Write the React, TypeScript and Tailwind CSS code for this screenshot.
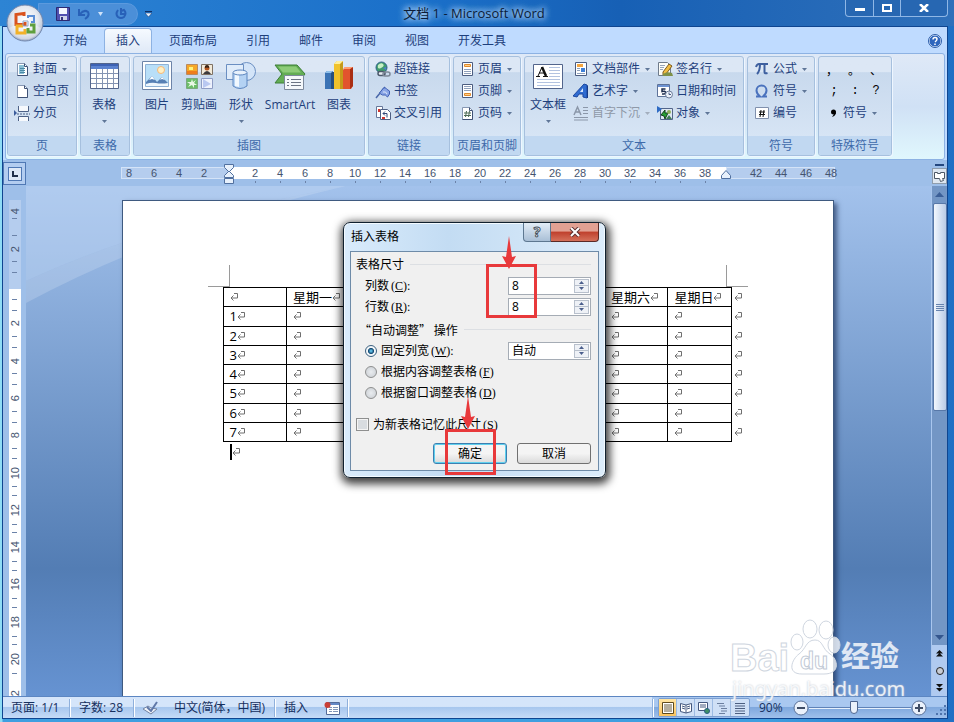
import React from "react";

type Kids = { children?: React.ReactNode };

function Svg({ w, h, children }: { w: number; h: number } & Kids) {
  return (
    <svg width={w} height={h} viewBox={`0 0 ${w} ${h}`} className="shrink-0" aria-hidden="true">
      {children}
    </svg>
  );
}

function Caret({ faded = false }: { faded?: boolean }) {
  return (
    <Svg w={5} h={3}>
      <path d="M0 0h5L2.5 3z" fill={faded ? "#a3aebd" : "#5f7698"} />
    </Svg>
  );
}

/* ---------- small ribbon icons (16 x 16) ---------- */

function PageIcon({ children }: Kids) {
  return (
    <Svg w={16} h={16}>
      <path d="M3.5 2.5h7l3 3v9h-10z" fill="#fff" stroke="#8797b3" />
      <path d="M13.500 6v8.500h-10M10.500 2.500v3h3" fill="none" stroke="#3f5276" />
      {children}
    </Svg>
  );
}

const CoverIcon = () => (
  <PageIcon>
    <path d="M5 4h5v9H5z" fill="#8cc0d6" />
    <path d="M6 7.500h5M6 9.500h5M6 11.500h5" stroke="#4c8aa6" />
  </PageIcon>
);
const BlankIcon = () => <PageIcon />;
const BreakIcon = () => (
  <Svg w={16} h={16}>
    <path d="M4.500 1v5.500h10V1M4.500 16v-4.500h10V16" fill="#f6f9fd" stroke="#4d6288" />
    <path d="M3 9h13" stroke="#4d6288" strokeDasharray="2 1" />
    <path d="M0 5l3 3-3 3z" fill="#3c5d9c" />
  </Svg>
);
const LinkIcon = () => (
  <Svg w={16} h={16}>
    <circle cx="6.500" cy="6.500" r="5.500" fill="#3f9a6c" stroke="#2f5f8d" />
    <path d="M3 4q3-3 5-1t-2 4-3-3" fill="#c6efc4" />
    <path d="M8 7l3-1v3z" fill="#4d7fd0" />
    <rect x="3" y="10.500" width="7" height="4" rx="2" fill="#e9eef5" stroke="#4b586b" strokeWidth="1.500" />
    <rect x="8" y="11" width="7" height="4" rx="2" fill="none" stroke="#7c8797" strokeWidth="1.500" />
  </Svg>
);
const BookmarkIcon = () => (
  <Svg w={16} h={16}>
    <path d="M1 15L10 4" stroke="#4967a8" strokeWidth="1.500" />
    <path d="M8.500 5q2-1 3 1l3 2q1 3-2 6-2-3-5-2-2-1-3-2z" fill="#8aa6e6" stroke="#3f5fb4" />
    <path d="M8 9q3-1 4 2" fill="none" stroke="#dbe6fb" />
  </Svg>
);
const CrossIcon = () => (
  <Svg w={16} h={16}>
    <path d="M1.500 1.500h6v11h-6z" fill="#fff" stroke="#66779a" />
    <path d="M5.500 4.500h7l3 3v7h-10z" fill="#fff" stroke="#4d5f84" />
    <path d="M3 4h2v3H3z" fill="#d0352f" />
    <path d="M8 8.500h4v4M8 8.500l2-2M8 8.500l2 2" fill="none" stroke="#2f4778" />
    <path d="M7 12h3v2H7z" fill="#d0352f" />
  </Svg>
);
const HeaderIcon = () => (
  <Svg w={16} h={16}>
    <path d="M3.500 1.500h10v13h-10z" fill="#fff" stroke="#4c5d80" />
    <path d="M5.500 3.500h6v2h-6z" fill="#ffd08a" stroke="#e08a2c" />
    <path d="M5 8.500h7M5 10.500h7M5 12.500h7" stroke="#8fa0bb" />
  </Svg>
);
const FooterIcon = () => (
  <Svg w={16} h={16}>
    <path d="M3.500 1.500h10v13h-10z" fill="#fff" stroke="#4c5d80" />
    <path d="M5.500 10.500h6v2h-6z" fill="#ffd08a" stroke="#e08a2c" />
    <path d="M5 3.500h7M5 5.500h7M5 7.500h7" stroke="#8fa0bb" />
  </Svg>
);
const NumberIcon = () => (
  <PageIcon>
    <path d="M7.500 6l-1 6M10.500 6l-1 6M5 8h7M5 10.500h7" stroke="#4d6b55" />
  </PageIcon>
);
const PartsIcon = () => (
  <Svg w={16} h={16}>
    <path d="M2.500 1.500h11v13h-11z" fill="#fff" stroke="#4c5d80" />
    <path d="M4 3h6v3H4z" fill="#f5a640" />
    <path d="M8 7h4v4H8z" fill="#3f7fd6" />
    <path d="M4 7.500h3M4 9.500h3M4 12.500h8" stroke="#8fa0bb" />
  </Svg>
);
const WordArtIcon = () => (
  <Svg w={16} h={16}>
    <path d="M0 13L11 1l3 1v13l-4-1v-3l-4 0-2 3z" fill="#2f6bd0" stroke="#1c47a0" />
    <path d="M14 2l1 1v12l-1 0z" fill="#173a86" />
    <path d="M10 5v4H7z" fill="#d8e6fb" />
  </Svg>
);
const DropCapIcon = () => (
  <Svg w={16} h={16}>
    <path d="M1 10L4.500 2 8 10M2.500 7h4" fill="none" stroke="#8b97a9" strokeWidth="1.500" />
    <path d="M10 2.500h5M10 5.500h5M10 8.500h5M1 12.500h14M1 15h14" stroke="#8b97a9" />
  </Svg>
);
const SignIcon = () => (
  <Svg w={16} h={16}>
    <path d="M1.500 1.500h9l3 3v10h-12z" fill="#fdfdf8" stroke="#6f7b8b" />
    <path d="M3 4.500h5M3 6.500h4M3 8.500h3" stroke="#97a5ba" />
    <path d="M6 11l6-8 3 2-6 8-3 1z" fill="#f2bd42" stroke="#7d5a1c" />
    <path d="M6 13q4-3 9-1l1 3H6z" fill="#7f9147" />
  </Svg>
);
const DateIcon = () => (
  <Svg w={16} h={16}>
    <path d="M.5 1.500h12v12H.5z" fill="#fff" stroke="#5e7399" />
    <path d="M1 2h11v2H1z" fill="#6d93d3" />
    <path d="M8.500 6H5v2.500q3.500-1 3.500 1t-3.500 1.500" fill="none" stroke="#1d2c4c" strokeWidth="1.500" />
    <circle cx="12" cy="11.500" r="3.500" fill="#eef3fb" stroke="#6b7c98" />
    <path d="M12 9.500v2h2" fill="none" stroke="#44587f" />
  </Svg>
);
const ObjectIcon = () => (
  <Svg w={16} h={16}>
    <path d="M3.500 3.500h12v11h-12z" fill="#dfe9f4" stroke="#52658a" />
    <path d="M0 1l5 3-5 4z" fill="#2e6bc4" />
    <path d="M4 10l4-5v3h3l-3 6-1-3z" fill="#27a035" stroke="#123f1a" />
    <circle cx="12" cy="7" r="2" fill="#8fb05a" />
    <path d="M9 14l3-4 3 4z" fill="#3f7d56" />
  </Svg>
);
const PiIcon = () => (
  <Svg w={16} h={16}>
    <path d="M2 6q1-3 3-3h9M6 3q0 7-3 10M10.500 3v8q0 2 3 1" fill="none" stroke="#3d5f9f" strokeWidth="2" />
  </Svg>
);
const OmegaIcon = () => (
  <Svg w={16} h={16}>
    <path d="M2 13.500h4q-3.500-3-3.500-6a5 5 0 0110 0q0 3-3.500 6h4" fill="none" stroke="#4a72bd" strokeWidth="2" />
  </Svg>
);
const HashIcon = () => (
  <Svg w={16} h={16}>
    <path d="M1.500 2.500h13v11h-13z" fill="#fff" stroke="#8090ad" />
    <path d="M7 5L6 12M10 5L9 12M5 7h6M5 9.500h6" stroke="#111" />
  </Svg>
);
const CommaIcon = () => (
  <Svg w={8} h={10}>
    <circle cx="3.500" cy="4" r="2.500" fill="#000" />
    <path d="M6 4q0 4-4 5l2-3z" fill="#000" />
  </Svg>
);

/* ---------- large ribbon icons (32 x 32) ---------- */

const TableBig = () => (
  <Svg w={32} h={32}>
    <path d="M2.500 4.500h28v25h-28z" fill="#fff" stroke="#53658c" />
    <path d="M3 5h27v5H3z" fill="#5b82cf" />
    <path d="M3 5h27v2H3z" fill="#3d62b4" />
    <path d="M8.500 10v19M14.500 10v19M19.500 10v19M25.500 10v19M3 14.500h27M3 19.500h27M3 24.500h27" stroke="#8494b3" />
  </Svg>
);
const PictureBig = () => (
  <Svg w={32} h={32}>
    <path d="M1.500 2.500h29v28h-29z" fill="#fff" stroke="#6d84a8" />
    <path d="M4.500 5.500h23v22h-23z" fill="#b9dff8" stroke="#8fb2d6" />
    <circle cx="20" cy="11" r="3.500" fill="#fff0c4" stroke="#f7b877" />
    <path d="M5 23l6-6 5 6 5-5 6 6v3H5z" fill="#5780b5" />
    <path d="M11 17l3 4-3-1-3 1zM21 18l3 3-3-1-2 1z" fill="#fff" />
    <path d="M5 25q5-2 10-1t12 0v3H5z" fill="#eef6fd" />
  </Svg>
);
const ClipBig = () => (
  <Svg w={32} h={32}>
    <path d="M3.500 5.500h11v10h-11z" fill="#f6a828" stroke="#b98a60" />
    <path d="M4 12h10v3H4z" fill="#ee7d1c" />
    <path d="M6 8h4v3H6z" fill="#fff27a" />
    <path d="M18.500 5.500h11v10h-11z" fill="#f2ead9" stroke="#7f7264" />
    <circle cx="24" cy="9" r="2.500" fill="#b5561f" />
    <path d="M22 7q2-2 4 0v2q-2-1-4 0z" fill="#3a2417" />
    <path d="M20 15q4-6 8 0z" fill="#3c3a3c" />
    <path d="M3.500 19.500h11v10h-11z" fill="#6bbd68" stroke="#7ba87e" />
    <path d="M9 20l1 3 3-2-2 3 3 2-3 0 0 3-2-3-4 2 2-3-3-2 4 0z" fill="#e9f8e4" />
    <path d="M18.500 19.500h11v10h-11z" fill="#eef2fc" stroke="#8e9cc4" />
    <path d="M20 20l8 5-8 4z" fill="#b9c8f1" />
  </Svg>
);
const ShapesBig = () => (
  <Svg w={32} h={32}>
    <circle cx="21.500" cy="12.500" r="9" fill="#d3e4f8" stroke="#6b8fc2" />
    <path d="M1.500 5.500h17v15h-17z" fill="#e0ecfa" stroke="#6b8fc2" />
    <path d="M8 14v13q7 5 14 0V14z" fill="#b4d2f3" stroke="#5d86bf" />
    <path d="M10 15h4v13l-4-1z" fill="#f1f8fe" />
    <ellipse cx="15" cy="13.500" rx="7" ry="2.500" fill="#e7f1fc" stroke="#5d86bf" />
  </Svg>
);
const SmartBig = () => (
  <Svg w={32} h={32}>
    <path d="M1 6h22l8 9-7 9H1l7-9z" fill="#63ad55" stroke="#3d7f36" />
    <path d="M4 7.500h18l5 6H9z" fill="#8dcc78" />
    <path d="M10.500 16.500h19v14h-19z" fill="#f5f8fb" stroke="#7c899c" />
    <path d="M13 20.500h2M17 20.500h10M13 23.500h2M17 23.500h10M13 26.500h2M17 26.500h10" stroke="#6b7484" />
  </Svg>
);
const ChartBig = () => (
  <Svg w={32} h={32}>
    <path d="M2 14l2-2h6v18H2z" fill="#3b73b5" />
    <path d="M8 13h3v17H8z" fill="#26507f" />
    <path d="M2 14l2-2h6l-2 2z" fill="#8fc0ea" />
    <path d="M11 5l3-3h6v28h-9z" fill="#f0c22b" />
    <path d="M17 4l3-2v28h-3z" fill="#c59a1a" />
    <path d="M11 5l3-3h6l-3 3z" fill="#ffef9a" />
    <path d="M20 11l2-3h8v19l-2 3h-8z" fill="#e2532d" />
    <path d="M27 10l3-2v19l-3 3z" fill="#a92e14" />
    <path d="M20 10l2-2h8l-3 2z" fill="#ff9d72" />
  </Svg>
);
const TextBoxBig = () => (
  <Svg w={32} h={32}>
    <path d="M1.500 5.500h29v24h-29z" fill="#fff" stroke="#53658c" />
    <path d="M6 17l4-9" stroke="#111" />
    <path d="M10 8l4 9" stroke="#111" strokeWidth="2.500" />
    <path d="M7 14h6M4 17.500h4M11 17.500h5" stroke="#111" />
    <path d="M17 8.500h11M17 11.500h11M17 14.500h11M17 17.500h11M5 20.500h23M5 23.500h23M5 26.500h23" stroke="#b3c3e0" />
  </Svg>
);

/* ---------- ribbon building blocks ---------- */

function Group({ label, className, children }: { label: string; className: string } & Kids) {
  return (
    <section
      className={`flex shrink-0 flex-col overflow-hidden rounded-[3px] border border-[#a6c0de] bg-linear-to-b from-[#dce7f5] from-15% via-[#c8d9ed] via-16% to-[#dbe8f7] shadow-[1px_1px_0_#eef6ff] ${className}`}
    >
      <div className="flex flex-1 px-[2px]">{children}</div>
      <h2 className="h-[19px] bg-[#c1d8f1] text-center leading-[19px] text-[#3e6aaa]">{label}</h2>
    </section>
  );
}

function Small({
  icon,
  text,
  caret = false,
  disabled = false,
}: {
  icon: React.ReactNode;
  text: string;
  caret?: boolean;
  disabled?: boolean;
}) {
  return (
    <button
      disabled={disabled}
      className="flex h-[22px] items-center gap-[3px] whitespace-nowrap text-[#1e3f7c] disabled:text-[#8f99a8]"
    >
      {icon}
      <span>{text}</span>
      {caret && (
        <span className="ml-[2px]">
          <Caret faded={disabled} />
        </span>
      )}
    </button>
  );
}

function Big({
  icon,
  text,
  caret = false,
  className = "w-[42px]",
}: {
  icon: React.ReactNode;
  text: string;
  caret?: boolean;
  className?: string;
}) {
  return (
    <button className={`flex shrink-0 flex-col items-center whitespace-nowrap pt-[2px] text-[#1e3f7c] ${className}`}>
      {icon}
      <span className="mt-[5px] leading-[18px]">{text}</span>
      <span className="mt-[2px] flex h-[10px] items-center">{caret && <Caret />}</span>
    </button>
  );
}

const Column = ({ className = "", children }: { className?: string } & Kids) => (
  <div className={`flex flex-col pt-px ${className}`}>{children}</div>
);

function Ribbon() {
  return (
    <div className="mx-[2px] flex h-[107px] gap-[3px] rounded-[3px] border border-[#8db2e3] bg-linear-to-b from-[#dfe9f7] via-[#d0e1f5] to-[#e0f7fd] px-px pt-[2px] pb-[3px]">
      <Group label="页" className="w-[70px]">
        <Column className="pl-[4px]">
          <Small icon={<CoverIcon />} text="封面" caret />
          <Small icon={<BlankIcon />} text="空白页" />
          <Small icon={<BreakIcon />} text="分页" />
        </Column>
      </Group>
      <Group label="表格" className="w-[50px]">
        <Big icon={<TableBig />} text="表格" caret />
      </Group>
      <Group label="插图" className="w-[232px]">
        <Big icon={<PictureBig />} text="图片" />
        <Big icon={<ClipBig />} text="剪贴画" />
        <Big icon={<ShapesBig />} text="形状" caret />
        <Big icon={<SmartBig />} text="SmartArt" className="w-[56px]" />
        <Big icon={<ChartBig />} text="图表" />
      </Group>
      <Group label="链接" className="w-[82px]">
        <Column className="pl-[4px]">
          <Small icon={<LinkIcon />} text="超链接" />
          <Small icon={<BookmarkIcon />} text="书签" />
          <Small icon={<CrossIcon />} text="交叉引用" />
        </Column>
      </Group>
      <Group label="页眉和页脚" className="w-[68px]">
        <Column className="pl-[3px]">
          <Small icon={<HeaderIcon />} text="页眉" caret />
          <Small icon={<FooterIcon />} text="页脚" caret />
          <Small icon={<NumberIcon />} text="页码" caret />
        </Column>
      </Group>
      <Group label="文本" className="w-[220px]">
        <Big icon={<TextBoxBig />} text="文本框" caret />
        <Column className="w-[84px] pl-[4px]">
          <Small icon={<PartsIcon />} text="文档部件" caret />
          <Small icon={<WordArtIcon />} text="艺术字" caret />
          <Small icon={<DropCapIcon />} text="首字下沉" caret disabled />
        </Column>
        <Column className="pl-[4px]">
          <Small icon={<SignIcon />} text="签名行" caret />
          <Small icon={<DateIcon />} text="日期和时间" />
          <Small icon={<ObjectIcon />} text="对象" caret />
        </Column>
      </Group>
      <Group label="符号" className="w-[68px]">
        <Column className="pl-[4px]">
          <Small icon={<PiIcon />} text="公式" caret />
          <Small icon={<OmegaIcon />} text="符号" caret />
          <Small icon={<HashIcon />} text="编号" />
        </Column>
      </Group>
      <Group label="特殊符号" className="w-[74px]">
        <Column className="flex-1 text-black">
          <div className="flex h-[22px] items-end justify-between pl-[5px] pr-[7px]">
            {["，", "。", "、"].map((c) => (
              <button key={c} className="w-[12px]">
                {c}
              </button>
            ))}
          </div>
          <div className="flex h-[22px] items-center justify-between px-[7px] font-['Liberation_Mono',monospace]">
            {[";", ":", "?"].map((c) => (
              <button key={c} className="w-[12px]">
                {c}
              </button>
            ))}
          </div>
          <div className="flex pl-[9px]">
            <Small icon={<span className="pr-[2px]"><CommaIcon /></span>} text="符号" caret />
          </div>
        </Column>
      </Group>
    </div>
  );
}

/* ---------- window chrome ---------- */

function OfficeButton() {
  return (
    <button aria-label="Office 按钮" className="absolute left-[6px] top-[4px] z-10">
      <svg width="38" height="38" viewBox="0 0 38 38" aria-hidden="true">
        <defs>
          <radialGradient id="orb" cx="50%" cy="40%" r="60%">
            <stop offset="0" stopColor="#ffffff" />
            <stop offset=".6" stopColor="#e3e8f0" />
            <stop offset="1" stopColor="#a9b4cb" />
          </radialGradient>
        </defs>
        <circle cx="19" cy="19" r="18" fill="url(#orb)" stroke="#6f86ad" />
        <path d="M3 24q16-9 32 0a17 17 0 01-32 0z" fill="#fff" opacity=".35" />
        <g fill="none">
          <path d="M18 12V9.500l-8 1v10h9V18" stroke="#d9531e" strokeWidth="3" />
          <path d="M22 14v-2h6v6h-3" stroke="#5b8ed6" strokeWidth="2" />
          <path d="M17 22h-6v7h8v-4" stroke="#f2b128" strokeWidth="3" />
          <path d="M24 21h4v7h-6v-4" stroke="#5f9f3e" strokeWidth="3" />
          <path d="M17 17h5v5h-5z" stroke="#8fa6c8" />
        </g>
      </svg>
    </button>
  );
}

function TitleBar() {
  return (
    <header className="flex h-[26px] shrink-0 items-start">
      <div className="flex flex-1 items-start">
        <div className="ml-[38px] mt-[3px] flex h-[22px] items-center rounded-r-[11px] border border-[#5b9ade] bg-[#4b8fd8] pl-[17px] pr-[10px]">
          <button aria-label="保存">
            <Svg w={14} h={14}>
              <path d="M.5.5h13v13H.5z" fill="#5150b0" stroke="#2b2a73" />
              <path d="M3 1h8v6H3z" fill="#f4f6ff" />
              <path d="M4 9h7v4H4z" fill="#cfd3ea" />
              <path d="M5 10h2v3H5z" fill="#33327e" />
            </Svg>
          </button>
          <button aria-label="撤消" className="ml-[8px]">
            <Svg w={12} h={12}>
              <path d="M1 1v6h6M2 6q4-5 8-2 2 4-3 7" fill="none" stroke="#2861b8" strokeWidth="2" />
            </Svg>
          </button>
          <button aria-label="撤消列表" className="ml-[8px]">
            <Svg w={5} h={4}>
              <path d="M0 0h5L2.500 4z" fill="#cfe3fa" />
            </Svg>
          </button>
          <button aria-label="重复" className="ml-[12px]">
            <Svg w={12} h={12}>
              <path d="M3 2q-3 4 0 7 3 2 6 0 3-4 0-7L6 3M6 0v6h5" fill="none" stroke="#2861b8" strokeWidth="2" />
            </Svg>
          </button>
        </div>
        <button aria-label="自定义快速访问工具栏" className="ml-[7px] mt-[11px]">
          <Svg w={7} h={6}>
            <path d="M0 .5h7" stroke="#0d2f66" />
            <path d="M0 2h7L3.500 6z" fill="#e6f0fc" stroke="#0d2f66" strokeWidth=".5" />
          </Svg>
        </button>
      </div>
      <h1 className="text-[13px] leading-[26px] text-[#0b1c38] [text-shadow:0_0_6px_#b5d6f8,0_0_6px_#b5d6f8,0_0_8px_#b5d6f8]">
        文档 1 - Microsoft Word
      </h1>
      <div className="flex flex-1 justify-end pr-[6px]">
        <div className="flex h-[17px] rounded-b-[4px] border border-t-0 border-[#8fb7e6] bg-[#2767b2]">
          <button aria-label="最小化" className="flex w-[28px] items-center justify-center border-r border-[#8fb7e6]">
            <span className="mt-[3px] h-[3px] w-[10px] bg-white" />
          </button>
          <button aria-label="还原" className="flex w-[27px] items-center justify-center border-r border-[#8fb7e6]">
            <span className="h-[8px] w-[10px] border-2 border-white" />
          </button>
          <button aria-label="关闭" className="flex w-[46px] items-center justify-center">
            <Svg w={10} h={8}>
              <path d="M1 0l8 8M9 0L1 8" stroke="#fff" strokeWidth="2.500" />
            </Svg>
          </button>
        </div>
      </div>
    </header>
  );
}

function Tabs() {
  const tabs = ["开始", "插入", "页面布局", "引用", "邮件", "审阅", "视图", "开发工具"];
  return (
    <nav className="flex h-[26px] items-end gap-[5px] pl-[48px] pr-[5px]">
      {tabs.map((t) => (
        <button
          key={t}
          className={
            t === "插入"
              ? "h-[25px] rounded-t-[4px] border border-b-0 border-[#8db2e3] bg-linear-to-b from-[#f6faff] to-[#dfe9f7] px-[11px] text-[#1e3f7c]"
              : "h-[25px] px-[12px] text-[#1e3f7c]"
          }
        >
          {t}
        </button>
      ))}
      <button aria-label="帮助" className="mb-[5px] ml-auto">
        <Svg w={14} h={14}>
          <circle cx="7" cy="7" r="6" fill="#2f66bd" stroke="#e7f0fc" strokeWidth="1" />
          <circle cx="7" cy="7" r="6.500" fill="none" stroke="#2c5ca8" />
          <path d="M5 5.500q0-2 2-2t2 1.500-2 3M7 9.500v1.500" fill="none" stroke="#fff" strokeWidth="1.500" />
        </Svg>
      </button>
    </nav>
  );
}

/* ---------- rulers ---------- */

const leftMarks = [8, 6, 4, 2];
const bodyMarks = Array.from({ length: 19 }, (_, i) => (i + 1) * 2);
const rightMarks = [42, 44, 46, 48];

function Mark({ n, tick = false }: { n: number; tick?: boolean }) {
  return (
    <span className="relative w-[25px] shrink-0 text-center">
      {n}
      {tick && <span className="absolute left-[12px] top-[14px] h-[2px] w-px bg-[#6b82a8]" />}
    </span>
  );
}

function HorizontalRuler() {
  return (
    <div className="flex h-[26px] shrink-0 bg-[#9ebfe9] pt-[2px]">
      <button
        aria-label="左对齐式制表符"
        className="flex h-[23px] w-[23px] items-center justify-center border border-[#4f78b4] bg-[#b3cdf0]"
      >
        <span className="flex h-[14px] w-[14px] items-center justify-center border border-[#4f78b4] bg-[#dfe9f7]">
          <span className="h-[6px] w-[6px] border-b-2 border-l-2 border-[#22304a]" />
        </span>
      </button>
      <div className="flex flex-1 justify-center pr-[2px] pt-[5px] font-['Liberation_Sans','Noto_Sans_CJK_SC',sans-serif] text-[11px] leading-[12px] text-[#45546f]">
        <div className="flex h-[12px] w-[108px] justify-end border border-[#d4e3f7] bg-[#b5cdee] pr-[11px] leading-[10px]">
          {leftMarks.map((n) => (
            <Mark key={n} n={n} />
          ))}
        </div>
        <div className="relative flex h-[12px] w-[497px] bg-white pl-[14px]">
          {bodyMarks.map((n) => (
            <Mark key={n} n={n} tick />
          ))}
          <svg className="absolute -left-[5px] -top-[3px]" width="10" height="21" viewBox="0 0 10 21" aria-hidden="true">
            <path d="M.5.5h9v3L5 8 .5 3.500zM.5 13.500v-2L5 7l4.500 4.500v2zM.5 14.500h9v5h-9z" fill="#e8f1fc" stroke="#51709f" />
          </svg>
          <svg className="absolute -right-[5px] top-[3px]" width="10" height="9" viewBox="0 0 10 9" aria-hidden="true">
            <path d="M.5 8.500v-3L5 .5l4.500 5v3z" fill="#e8f1fc" stroke="#51709f" />
          </svg>
        </div>
        <div className="flex h-[12px] w-[109px] border border-[#d4e3f7] bg-[#b5cdee] pl-[17px] leading-[10px]">
          {rightMarks.map((n) => (
            <Mark key={n} n={n} />
          ))}
        </div>
      </div>
      <div className="flex w-[16px] flex-col items-center">
        <span className="mt-[2px] h-[2px] w-[9px] bg-[#24477f]" />
        <button
          aria-label="标尺"
          className="mt-[2px] flex h-[16px] w-[15px] items-center justify-center border border-[#8f9dad] bg-[#dde6f0]"
        >
          <Svg w={13} h={13}>
            <path d="M1.500 2.500h3v1h3v-1h4v6h-2l1 2-3 1-1-3h-5z" fill="#fff" stroke="#4d5866" />
          </Svg>
        </button>
      </div>
    </div>
  );
}

function VerticalRuler() {
  const cell = "flex flex-1 flex-col items-center justify-around";
  const tick = <span className="h-px w-[5px] bg-[#6b82a8]" />;
  const num = (n: number | string) => <span className="[writing-mode:vertical-rl] rotate-180 leading-[12px]">{n}</span>;
  return (
    <div className="flex w-[23px] shrink-0 flex-col items-center overflow-hidden bg-[#9ebfe9] pt-[14px] font-['Liberation_Sans',sans-serif] text-[11px] text-[#45546f]">
      <div className="flex w-[12px] flex-1 flex-col bg-[linear-gradient(#b5cdee_89px,#fff_89px)]">
        <div className="flex h-[30px] flex-col items-center gap-[4px] pt-[8px]">
          {num(4)}
          {tick}
        </div>
        {[2, 0, 2, 4, 6, 8, 10, 12, 14, 16, 18, 20].map((n, i) => (
          <div key={i} className={cell}>
            {tick}
            {n === 0 ? <span className="h-[6px]" /> : num(n)}
            {tick}
          </div>
        ))}
        <div className="flex h-[18px] flex-col items-center gap-[4px] overflow-hidden pt-[8px]">
          {tick}
          {num(2)}
        </div>
      </div>
    </div>
  );
}

/* ---------- document ---------- */

const Return = () => (
  <span className="inline-block align-middle">
    <Svg w={8} h={8}>
      <path d="M4 .5h3.500V5H1M3.500 2.500L1 5l2.500 2.500" fill="none" stroke="#6f6f6f" />
    </Svg>
  </span>
);

/* The columns between Monday and Saturday lie behind the dialog. */
const days = ["", "星期一", null, null, null, null, "星期六", "星期日"];

function DocumentPage() {
  return (
    <article className="relative mt-[14px] w-[712px] border border-b-0 border-[#3f5a80] bg-white shadow-[3px_3px_5px_rgba(20,40,80,.65)]">
      <div className="mx-[85px] flex justify-between pt-[64px]">
        <span className="h-[22px] w-[22px] border-b border-r border-[#9a9a9a]" />
        <span className="h-[22px] w-[22px] border-b border-l border-[#9a9a9a]" />
      </div>
      <table className="ml-[100px] h-[155px] w-[523px] table-fixed border-collapse text-[13px] leading-[18px] text-black">
        <tbody>
          {[0, 1, 2, 3, 4, 5, 6, 7].map((r) => (
            <tr key={r}>
              {days.map((d, c) => (
                <td key={c} className="overflow-hidden whitespace-nowrap border border-black p-0 pl-[6px]">
                  {d !== null && (
                    <span className="flex h-[18px] items-center">
                      {r === 0 ? d : c === 0 ? r : ""}
                      <Return />
                    </span>
                  )}
                </td>
              ))}
              <td className="w-[14px] p-0 pl-[2px]">
                <span className="flex">
                  <Return />
                </span>
              </td>
            </tr>
          ))}
        </tbody>
      </table>
      <p className="ml-[107px] mt-[2px] flex h-[16px] items-center border-l-2 border-black">
        <Return />
      </p>
    </article>
  );
}

function Watermark() {
  return (
    <div className="absolute bottom-[20px] right-[48px] h-[84px] w-[176px] font-['Liberation_Sans','Noto_Sans_CJK_SC',sans-serif] text-white/80">
      <svg className="absolute left-[58px] top-0" width="54" height="60" viewBox="0 0 54 60" aria-hidden="true">
        <g fill="#fff" fillOpacity=".75" stroke="#cfd6e0">
          <ellipse cx="9" cy="24" rx="6" ry="8" />
          <ellipse cx="22" cy="11" rx="7" ry="9" />
          <ellipse cx="38" cy="12" rx="7" ry="9" />
          <ellipse cx="46" cy="27" rx="6" ry="8" />
          <path d="M27 22c-9 0-9 9-16 14s-13 20 3 20h22c17 0 14-15 6-20s-7-14-15-14z" />
        </g>
      </svg>
      <span className="absolute left-0 top-[21px] text-[38px] font-bold leading-[38px] [-webkit-text-stroke:1px_#cfd6e0]">
        Bai
      </span>
      <span className="absolute left-[70px] top-[31px] text-[23px] font-bold leading-[24px] [-webkit-text-stroke:1px_#c2cad6]">
        du
      </span>
      <span className="absolute left-[111px] top-[22px] text-[29px] font-bold leading-[34px]">经验</span>
      <span className="absolute left-[2px] top-[60px] font-['Noto_Sans',sans-serif] text-[20px] leading-[22px] [text-shadow:0_0_2px_#b9c2ce]">
        jingyan.baidu.com
      </span>
    </div>
  );
}

function VerticalScrollbar() {
  return (
    <div className="flex w-[16px] shrink-0 flex-col items-center border-l border-[#a9c6ee] bg-[#7396c5]">
      <button aria-label="向上滚动" className="flex h-[17px] w-full items-center justify-center">
        <Svg w={9} h={5}>
          <path d="M0 5h9L4.500 0z" fill="#3b5f98" />
        </Svg>
      </button>
      <div className="flex h-[208px] w-[14px] flex-col items-center justify-center gap-px rounded-[2px] border border-[#5878a8] bg-linear-to-r from-[#f2f7fd] to-[#b9cbe6]">
        {[0, 1, 2, 3].map((i) => (
          <span key={i} className="h-px w-[8px] bg-[#6683ae]" />
        ))}
      </div>
      <div className="flex-1" />
      <button aria-label="向下滚动" className="flex h-[16px] w-full items-center justify-center">
        <Svg w={9} h={5}>
          <path d="M0 0h9L4.500 5z" fill="#34568e" />
        </Svg>
      </button>
      <div className="flex h-[51px] w-full flex-col items-center justify-around bg-[#b0caf0]">
        <button aria-label="前一页">
          <Svg w={7} h={8}>
            <path d="M3.500 0L7 3.500H0zM3.500 3L7 6.500H0z" fill="#111" />
          </Svg>
        </button>
        <button aria-label="选择浏览对象">
          <Svg w={8} h={8}>
            <circle cx="4" cy="4" r="3.500" fill="#c8ccd4" stroke="#222" />
          </Svg>
        </button>
        <button aria-label="下一页">
          <Svg w={7} h={8}>
            <path d="M0 0h7L3.500 3.500zM0 4h7L3.500 7.500z" fill="#111" />
          </Svg>
        </button>
      </div>
    </div>
  );
}

/* ---------- dialog ---------- */

function Spin({ id, value }: { id: string; value: string }) {
  return (
    <span className="ml-auto flex h-[18px] w-[83px] border border-[#a5acb5] bg-white p-px">
      <input id={id} defaultValue={value} className="w-0 min-w-0 flex-1 bg-transparent pl-[2px] outline-none" />
      <span className="flex w-[15px] flex-col">
        <button
          type="button"
          aria-label="增加"
          className="flex flex-1 items-center justify-center border border-[#b8c0cc] bg-[#eef1f6]"
        >
          <Svg w={5} h={3}>
            <path d="M0 3h5L2.500 0z" fill="#4a5e8c" />
          </Svg>
        </button>
        <button
          type="button"
          aria-label="减少"
          className="flex flex-1 items-center justify-center border border-t-0 border-[#b8c0cc] bg-[#eef1f6]"
        >
          <Svg w={5} h={3}>
            <path d="M0 0h5L2.500 3z" fill="#4a5e8c" />
          </Svg>
        </button>
      </span>
    </span>
  );
}

const Key = ({ k, colon = false }: { k: string; colon?: boolean }) => (
  <span className="ml-[2px] font-['Liberation_Serif',serif]">
    (<u>{k}</u>){colon && ":"}
  </span>
);

function Heading({ children }: Kids) {
  return (
    <h3 className="flex h-[21px] items-center gap-[6px] whitespace-nowrap">
      {children}
      <span className="h-px flex-1 bg-[#dcdfe3]" />
    </h3>
  );
}

function Radio({ id, text, k, checked = false, children }: { id: string; text: string; k: string; checked?: boolean } & Kids) {
  return (
    <div className="flex h-[21px] items-center pl-[9px]">
      <input
        type="radio"
        id={id}
        name="fit"
        defaultChecked={checked}
        className="h-[12px] w-[12px] appearance-none rounded-full border border-[#8e8f8f] bg-[radial-gradient(#e9ecef,#c9cdd2)] checked:border-[#3c6180] checked:bg-[radial-gradient(#57b4dd_10%,#14476f_38%,#f2f6f9_48%)]"
      />
      <label htmlFor={id} className="ml-[4px]">
        {text}
        <Key k={k} colon={checked} />
      </label>
      {children}
    </div>
  );
}

const Arrow = ({ className }: { className: string }) => (
  <svg className={`absolute ${className}`} width="14" height="33" viewBox="0 0 14 33" aria-hidden="true">
    <path d="M7 0l3 21 4-1L7 33 0 20l4 1z" fill="#e8393b" />
  </svg>
);

function InsertTableDialog() {
  const action = "h-[21px] w-[74px] rounded-[3px] border bg-linear-to-b from-[#f4f4f4] from-50% to-[#dadada]";
  return (
    <div
      role="dialog"
      aria-label="插入表格"
      className="absolute left-[343px] top-[222px] z-20 flex w-[263px] flex-col rounded-[7px] border border-[#10202e] bg-[linear-gradient(90deg,#d9ebfb,#c3dcf3_40%,#dcecfa)] px-[6px] pb-[6px] text-[12px] text-black shadow-[inset_0_0_0_1px_#f3faff,1px_3px_9px_3px_rgba(0,0,0,.75)]"
    >
      <div className="flex h-[28px] items-start">
        <h2 className="flex-1 pl-px leading-[28px]">插入表格</h2>
        <button
          aria-label="帮助"
          className="flex h-[19px] w-[28px] items-center justify-center rounded-bl-[4px] border border-t-0 border-[#5d7790] bg-linear-to-b from-[#e3edf7] to-[#a9bfd6]"
        >
          <span className="text-[14px] font-bold leading-[14px] text-white [-webkit-text-stroke:1px_#465260]">?</span>
        </button>
        <button
          aria-label="关闭"
          className="flex h-[19px] w-[48px] items-center justify-center rounded-br-[4px] border border-l-0 border-t-0 border-[#5a2a26] bg-linear-to-b from-[#e2a193] from-45% via-[#bf3f2c] via-50% to-[#d4705a]"
        >
          <Svg w={12} h={10}>
            <path d="M2 1l8 8M10 1L2 9" stroke="#5f3030" strokeWidth="4" />
            <path d="M2 1l8 8M10 1L2 9" stroke="#fff" strokeWidth="2" />
          </Svg>
        </button>
      </div>
      <form className="flex flex-col border border-[#6e8ba8] bg-[#f0f0f0] pb-[6px] pl-[5px] pr-[7px] pt-[2px]">
        <Heading>表格尺寸</Heading>
        <div className="flex h-[21px] items-center pl-[9px]">
          <label htmlFor="cols">
            列数
            <Key k="C" colon />
          </label>
          <Spin id="cols" value="8" />
        </div>
        <div className="flex h-[21px] items-center pl-[9px]">
          <label htmlFor="rows">
            行数
            <Key k="R" colon />
          </label>
          <Spin id="rows" value="8" />
        </div>
        <div className="mt-[2px]">
          <Heading>
            <span className="pl-[3px] font-['Noto_Sans_CJK_SC',sans-serif]">“自动调整” 操作</span>
          </Heading>
        </div>
        <Radio id="fixed" text="固定列宽" k="W" checked>
          <Spin id="width" value="自动" />
        </Radio>
        <Radio id="content" text="根据内容调整表格" k="F" />
        <Radio id="window" text="根据窗口调整表格" k="D" />
        <div className="mt-[11px] flex h-[21px] items-center">
          <input
            type="checkbox"
            id="remember"
            className="h-[13px] w-[13px] appearance-none border border-[#8e8f8f] bg-[#d8dce0] shadow-[inset_0_0_0_1px_#f4f4f4]"
          />
          <label htmlFor="remember" className="ml-[4px]">
            为新表格记忆此尺寸
            <Key k="S" />
          </label>
        </div>
        <div className="mt-[8px] flex justify-end gap-[10px]">
          <button type="button" className={`${action} border-[#3c7fb1] shadow-[inset_0_0_0_1px_#5fd0ee]`}>
            确定
          </button>
          <button type="button" className={`${action} border-[#707070]`}>
            取消
          </button>
        </div>
      </form>
      <span className="pointer-events-none absolute left-[142px] top-[41px] h-[54px] w-[51px] border-[3px] border-[#e8393b]" />
      <Arrow className="left-[158px] top-[13px]" />
      <span className="pointer-events-none absolute left-[101px] top-[206px] h-[46px] w-[51px] border-[3px] border-[#e8393b]" />
      <Arrow className="left-[117px] top-[173px]" />
    </div>
  );
}

/* ---------- status bar ---------- */

const Divider = () => <span className="h-[18px] w-[2px] border-l border-[#8fb0dc] bg-white" />;

function StatusBar() {
  const view = "flex h-[17px] w-[18px] items-center justify-center border-r border-[#9dbbe3]";
  return (
    <footer className="flex h-[22px] shrink-0 items-center whitespace-nowrap border-t border-[#5c86c2] bg-linear-to-b from-[#d5e5fa] from-45% via-[#a8c7ee] via-50% to-[#c5dbf7] text-[#152f5e]">
      <span className="w-[66px] pl-[8px]">页面: 1/1</span>
      <Divider />
      <span className="w-[62px] pl-[8px]">字数: 28</span>
      <Divider />
      <button aria-label="校对" className="w-[39px] pl-[7px]">
        <Svg w={16} h={14}>
          <path d="M1 8l5-3 3 2 6 1-6 5z" fill="#f2f5fa" stroke="#7384a3" />
          <path d="M5 6l4 4 6-9" fill="none" stroke="#6078a8" strokeWidth="2" />
        </Svg>
      </button>
      <span className="w-[100px]">中文(简体，中国)</span>
      <Divider />
      <span className="w-[48px] pl-[8px]">插入</span>
      <button aria-label="录制宏" className="w-[23px]">
        <Svg w={16} h={14}>
          <path d="M2.500 1.500h13v12h-13z" fill="#fff" stroke="#536b99" />
          <path d="M3 2h12v2H3z" fill="#6488c6" />
          <path d="M5 6.500h3M9 6.500h5M5 8.500h3M9 8.500h5M5 10.500h3M9 10.500h5" stroke="#8195b8" />
          <circle cx="3.500" cy="4" r="3" fill="#c93f37" />
        </Svg>
      </button>
      <Divider />
      <div className="ml-auto flex items-center self-stretch bg-linear-to-b from-[#a9c8f0] from-45% via-[#7fa8dd] via-50% to-[#9fc0ec]">
        <Divider />
        <div className="ml-[4px] flex h-[19px] rounded-[2px] border border-[#7c9fd1] bg-[#cfe0f6]">
          <button aria-label="页面视图" className={`${view} bg-linear-to-b from-[#ffe5a3] to-[#fbc45f]`}>
            <Svg w={12} h={12}>
              <path d="M.5.5h11v11H.5z" fill="#fff" stroke="#5f4b1e" />
              <path d="M2 3h8M2 5h8M2 7h8M2 9h8" stroke="#6a5c3d" />
            </Svg>
          </button>
          <button aria-label="阅读版式" className={view}>
            <Svg w={12} h={12}>
              <path d="M.5 1.500L6 3l5.500-1.500v8L6 11 .5 9.500zM6 3v8" fill="#fff" stroke="#44587f" />
              <path d="M2 4l3 1M2 6l3 1M7 5l3-1M7 7l3-1" stroke="#44587f" />
            </Svg>
          </button>
          <button aria-label="Web 版式" className={view}>
            <Svg w={12} h={12}>
              <path d="M.5.5h9v8h-9z" fill="#fff" stroke="#44587f" />
              <path d="M2 3h6M2 5h6" stroke="#44587f" />
              <circle cx="9" cy="9" r="2.500" fill="#3f9166" stroke="#2b5d82" />
            </Svg>
          </button>
          <button aria-label="大纲视图" className={view}>
            <Svg w={12} h={12}>
              <path d="M1 1.500h7M3 4h6M5 6.500h6M5 9h6M3 11.500h6" stroke="#6b7f9f" />
            </Svg>
          </button>
          <button aria-label="普通视图" className="flex h-[17px] w-[18px] items-center justify-center">
            <Svg w={12} h={12}>
              <path d="M1 1.500h10M1 4h10M1 6.500h10M1 9h10M1 11.500h10" stroke="#4c5f80" />
            </Svg>
          </button>
        </div>
        <span className="ml-[9px] w-[34px]">90%</span>
        <button aria-label="缩小">
          <Svg w={16} h={16}>
            <circle cx="8" cy="8" r="7" fill="#eaf1fb" stroke="#5b7299" />
            <path d="M4 8h8" stroke="#3f4d66" strokeWidth="2" />
          </Svg>
        </button>
        <input
          type="range"
          aria-label="显示比例"
          min={0}
          max={100}
          defaultValue={44}
          className="h-[14px] w-[102px] appearance-none bg-[linear-gradient(transparent_6px,#5f83b8_6px,#5f83b8_7px,#e6f0fc_7px,#e6f0fc_8px,transparent_8px)] [&::-webkit-slider-thumb]:h-[13px] [&::-webkit-slider-thumb]:w-[8px] [&::-webkit-slider-thumb]:appearance-none [&::-webkit-slider-thumb]:rounded-b-[4px] [&::-webkit-slider-thumb]:border [&::-webkit-slider-thumb]:border-[#4d6590] [&::-webkit-slider-thumb]:bg-[#eaf1fb]"
        />
        <button aria-label="放大">
          <Svg w={16} h={16}>
            <circle cx="8" cy="8" r="7" fill="#eaf1fb" stroke="#5b7299" />
            <path d="M4 8h8M8 4v8" stroke="#3f4d66" strokeWidth="2" />
          </Svg>
        </button>
        <span className="ml-[8px] mr-px mt-[4px]">
          <Svg w={11} h={11}>
            <path d="M9 1h2v2H9zM5 5h2v2H5zM9 5h2v2H9zM1 9h2v2H1zM5 9h2v2H5zM9 9h2v2H9z" fill="#4e74ad" />
          </Svg>
        </span>
      </div>
    </footer>
  );
}

/* ---------- window ---------- */

export default function App() {
  return (
    <div className="relative flex h-screen flex-col overflow-hidden bg-[linear-gradient(90deg,#2d84d4,#1a6fc9_45%,#1760b5_65%,#2f70ba)] font-['Open_Sans','Noto_Sans_CJK_SC',sans-serif] text-[12px] leading-[18px]">
      <TitleBar />
      <OfficeButton />
      <div className="flex min-h-0 flex-1 flex-col bg-[linear-gradient(90deg,#8fdcf5_2px,#3f9fe0_3px,#3f9fe0_80%,#1f6fc4)] pb-[3px] pl-[2px] pr-[6px]">
        <main className="flex min-h-0 flex-1 flex-col border border-[#0f4590] bg-[#bfdbff]">
          <Tabs />
          <Ribbon />
          <HorizontalRuler />
          <div className="flex min-h-0 flex-1">
            <VerticalRuler />
            <div className="relative flex min-w-0 flex-1 justify-center overflow-hidden bg-linear-to-b from-[#a3c2ec] via-[#537db4] via-75% to-[#6693d2] pr-[2px]">
              <svg
                className="absolute left-0 top-0"
                width="340"
                height="120"
                viewBox="0 0 340 120"
                aria-hidden="true"
              >
                <path d="M0 0h320Q130 35 0 95z" fill="#c2d8f3" opacity=".45" />
                <path d="M0 95Q130 35 320 0 140 42 0 117z" fill="#dbe8f8" opacity=".25" />
              </svg>
              <DocumentPage />
            </div>
            <VerticalScrollbar />
          </div>
          <StatusBar />
        </main>
      </div>
      <Watermark />
      <InsertTableDialog />
    </div>
  );
}
